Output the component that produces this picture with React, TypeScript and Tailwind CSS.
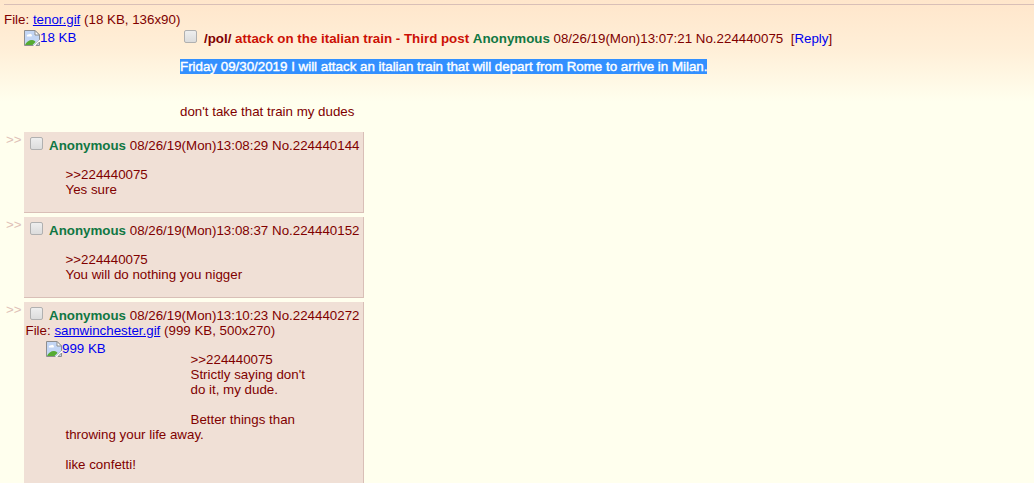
import type { ReactNode } from "react";

const BrokenImage = ({ size }: { size: string }) => (
  <a className="flex items-start text-[#0000ee]">
    <svg width="16" height="16" viewBox="0 0 16 16" className="shrink-0">
      <path d="M0.5 0.5h10.5l4.5 4.5v5l-5.5 5.5h-9.5z" fill="#c3d6f5" stroke="#8e8e8e" />
      <path d="M11 0.5v4.5h4.5z" fill="#fff" stroke="#8e8e8e" />
      <path d="M3 6.5a1.5 1.5 0 0 1 2-2a1.6 1.6 0 0 1 2.600 2z" fill="#fff" />
      <path d="M1 15c1-3 4-5 7-5c2 0 3 1 3.500 2l-3 3z" fill="#56ab32" />
      <path d="M9 16l7-6.500v2l-5 4.500z" fill="#fff" />
      <path d="M12 15.500h3.500v-3.500z" fill="#c3d6f5" stroke="#8e8e8e" />
    </svg>
    <span>{size}</span>
  </a>
);

const Checkbox = () => (
  <div className="-mt-px h-[13px] w-[13px] shrink-0 rounded-[2px] border border-[#b0b0b0] bg-linear-to-b from-[#eeeeee] to-[#dcdcdc]" />
);

const FileInfo = ({ name, info }: { name: string; info: string }) => (
  <div className="whitespace-pre">
    File: <a className="text-[#0000ee] underline">{name}</a> {info}
  </div>
);

const Name = () => <span className="font-bold text-[#117743]">Anonymous</span>;

type ReplyProps = {
  date: string;
  no: string;
  className: string;
  children: ReactNode;
};

const Reply = ({ date, no, className, children }: ReplyProps) => (
  <div className="flex items-start">
    <div className="w-6 shrink-0 pl-1.5 text-[#e0bfb7]">&gt;&gt;</div>
    <div
      className={`w-[340px] border-r border-b border-[#d9bfb7] bg-[#f0e0d6] pt-1.5 ${className}`}
    >
      <div className="flex pl-1.5">
        <Checkbox />
        <div className="ml-1.5 whitespace-pre">
          <Name /> {date} No.{no}
        </div>
      </div>
      {children}
    </div>
  </div>
);

const App = () => (
  <div className="h-[483px] overflow-hidden bg-[#ffffee] bg-linear-to-b from-[#ffe6cb] via-[#ffefd8] via-[50px] to-[#ffffee] to-[102px] pt-1 font-['Liberation_Sans',Arial,sans-serif] text-[13.333px] leading-[15px] text-[#800000]">
    <hr className="ml-1 border-t border-[#d9bfb7]" />
    <div className="pt-[7px] pl-1">
      <FileInfo name="tenor.gif" info="(18 KB, 136x90)" />
    </div>
    <div className="flex h-[105px] pt-[3px] pl-6">
      <div className="w-[156px] shrink-0">
        <BrokenImage size="18 KB" />
      </div>
      <div>
        <div className="flex pt-px pl-1">
          <Checkbox />
          <div className="ml-[7px] whitespace-pre">
            <b>/pol/</b>{" "}
            <span className="font-bold text-[#cc1105]">
              attack on the italian train - Third post
            </span>{" "}
            <Name /> 08/26/19(Mon)13:07:21 No.224440075{"  "}[
            <a className="text-[#0000ee]">Reply</a>]
          </div>
        </div>
        <div className="mt-[13px] flex">
          <span className="bg-[#3390ff] whitespace-pre text-white [-webkit-text-stroke:0.4px_white]">
            Friday 09/30/2019 I will attack an italian train that will depart from Rome to arrive in Milan.
          </span>
        </div>
        <div className="mt-[30px]">don't take that train my dudes</div>
      </div>
    </div>

    <div className="flex flex-col gap-1">
      <Reply date="08/26/19(Mon)13:08:29" no="224440144" className="h-[81px]">
        <div className="mt-3.5 ml-[41.5px]">
          &gt;&gt;224440075
          <br />
          Yes sure
        </div>
      </Reply>
      <Reply date="08/26/19(Mon)13:08:37" no="224440152" className="h-[81px]">
        <div className="mt-3.5 ml-[41.5px]">
          &gt;&gt;224440075
          <br />
          You will do nothing you nigger
        </div>
      </Reply>
      <Reply date="08/26/19(Mon)13:10:23" no="224440272" className="h-[200px]">
        <div className="pl-[1.5px]">
          <FileInfo name="samwinchester.gif" info="(999 KB, 500x270)" />
        </div>
        <div className="mt-[3px] flex pl-[22px]">
          <div className="w-[144.5px] shrink-0">
            <BrokenImage size="999 KB" />
          </div>
          <div className="mt-[11px]">
            &gt;&gt;224440075
            <br />
            Strictly saying don't
            <br />
            do it, my dude.
            <br />
            <br />
            Better things than
          </div>
        </div>
        <div className="ml-[41.5px]">
          throwing your life away.
          <br />
          <br />
          like confetti!
        </div>
      </Reply>
    </div>
  </div>
);

export default App;
